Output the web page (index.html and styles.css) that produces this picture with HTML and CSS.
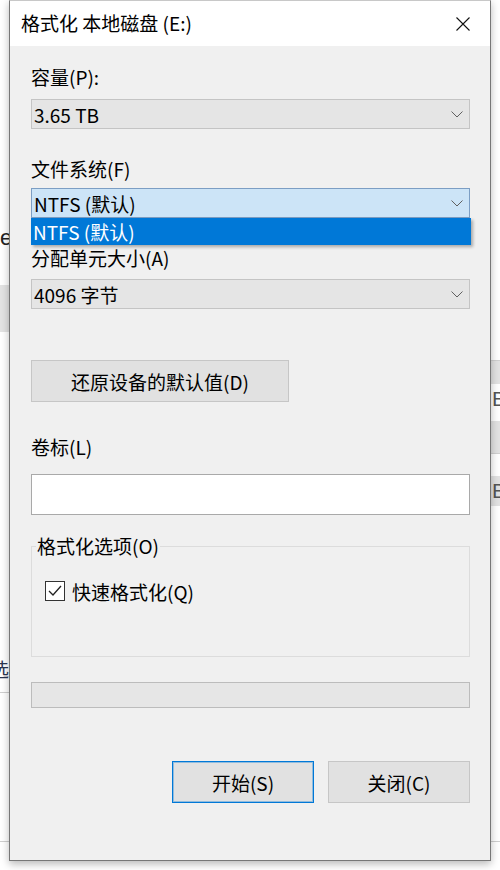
FILE: index.html
```html
<!DOCTYPE html>
<html lang="zh-CN">
<head>
  <meta charset="UTF-8" />
  <meta name="viewport" content="width=device-width, initial-scale=1.0" />
  <title>格式化 本地磁盘 (E:)</title>
  <link rel="stylesheet" href="styles.css">
</head>
<body>
  <div class="desk">
    <!-- bits of the window behind, left side -->
    <div class="side side-left">
      <div class="frag-e">e</div>
      <div class="frag-gray"></div>
      <div class="frag-link"><span>选</span></div>
      <div class="frag-line line-a"></div>
      <div class="frag-line line-b"></div>
    </div>

    <div class="dialog">
      <div class="titlebar">
        <span class="title">格式化 本地磁盘 (E:)</span>
        <svg class="close" width="14" height="14" viewBox="0 0 14 14">
          <path d="M0.5 0.5 L13.5 13.5 M13.5 0.5 L0.5 13.5" stroke="#111" stroke-width="1.1" fill="none" />
        </svg>
      </div>

      <div class="dlg-body">
        <div class="lbl lbl-cap">容量(P):</div>
        <div class="combo combo-cap">
          <span>3.65 TB</span>
          <svg class="chev" width="12" height="7" viewBox="0 0 12 7"><polyline points="0.5,0.5 6,6 11.5,0.5" fill="none" stroke="#606060" stroke-width="1" /></svg>
        </div>

        <div class="lbl lbl-fs">文件系统(F)</div>
        <div class="combo combo-fs focus">
          <span>NTFS (默认)</span>
          <svg class="chev" width="12" height="7" viewBox="0 0 12 7"><polyline points="0.5,0.5 6,6 11.5,0.5" fill="none" stroke="#606060" stroke-width="1" /></svg>
          <div class="dropdown">NTFS (默认)</div>
        </div>

        <div class="lbl lbl-unit">分配单元大小(A)</div>
        <div class="combo combo-unit">
          <span>4096 字节</span>
          <svg class="chev" width="12" height="7" viewBox="0 0 12 7"><polyline points="0.5,0.5 6,6 11.5,0.5" fill="none" stroke="#606060" stroke-width="1" /></svg>
        </div>

        <button class="btn btn-restore">还原设备的默认值(D)</button>

        <div class="lbl lbl-vol">卷标(L)</div>
        <input class="textbox" type="text" value="" />

        <fieldset class="group">
          <legend>格式化选项(O)</legend>
          <label class="check-row">
            <span class="checkbox">
              <svg width="14" height="12" viewBox="0 0 14 12"><polyline points="1,6 5,10 13,1" fill="none" stroke="#222" stroke-width="1.3" /></svg>
            </span>
            <span>快速格式化(Q)</span>
          </label>
        </fieldset>

        <div class="progress"></div>

        <div class="actions">
          <button class="btn btn-default">开始(S)</button>
          <button class="btn">关闭(C)</button>
        </div>
      </div>
    </div>

    <!-- bits of the window behind, right side -->
    <div class="side side-right">
      <div class="band band-a"></div>
      <div class="frag-b">B</div>
      <div class="band band-b"></div>
      <div class="band band-c"><span class="frag-b">B</span></div>
      <div class="frag-line line-r"></div>
    </div>
  </div>
</body>
</html>
```

FILE: styles.css
```css
body {
  margin: 0;
  background: #ffffff;
  font-family: "Noto Sans CJK SC", "Noto Sans", sans-serif;
  color: #000;
  overflow: hidden;
}
.desk {
  display: grid;
  grid-template-columns: 9px 482px 9px;
  width: 500px;
  height: 870px;
}

/* background window pieces */
.side {
  display: flex;
  flex-direction: column;
  overflow: hidden;
}
.frag-e {
  margin-top: 227px;
  height: 22px;
  font-family: "Liberation Sans", sans-serif;
  font-size: 22px;
  line-height: 22px;
  color: #222;
}
.frag-gray {
  margin-top: 36px;
  height: 47px;
  background: #e3e3e3;
}
.frag-link {
  margin-top: 325px;
  height: 24px;
  font-size: 19px;
  line-height: 24px;
  color: #2a3550;
  white-space: nowrap;
}
.frag-link span {
  margin-left: -10px;
}
.frag-line {
  height: 1px;
  background: #cfcfcf;
}
.line-a { margin-top: 11px; }
.line-b { margin-top: 148px; }
.band {
  background: #e2e2e2;
}
.band-a { margin-top: 360px; height: 23px; border-top: 1px solid #d0d0d0; }
.band-b { margin-top: 12px; height: 32px; border-bottom: 1px solid #d0d0d0; }
.band-c { margin-top: 22px; height: 30px; }
.frag-b {
  display: block;
  margin-top: 4px;
  height: 21px;
  padding-left: 1px;
  font-family: "Liberation Sans", sans-serif;
  font-size: 21px;
  line-height: 21px;
  color: #555;
}
.line-r { margin-top: 335px; }

/* dialog */
.dialog {
  height: 859px;
  background: #f0f0f0;
  border: 1px solid #777;
  border-top-color: #c8c8c8;
  box-shadow: 0 3px 8px rgba(0, 0, 0, 0.28);
  position: relative;
  z-index: 1;
}
.titlebar {
  height: 45px;
  background: #fff;
  display: flex;
  align-items: center;
  justify-content: space-between;
  padding: 0 20px 0 11px;
}
.title {
  font-size: 19px;
  line-height: 24px;
  margin-top: -1px;
}
.close {
  display: block;
  margin-top: 1px;
}
.dlg-body {
  display: flex;
  flex-direction: column;
  padding: 0 20px 0 21px;
}
.lbl {
  height: 24px;
  font-size: 19px;
  line-height: 24px;
}
.lbl-cap { margin-top: 19px; }
.lbl-fs { margin-top: 28px; }
.lbl-unit { margin-top: 28px; }
.lbl-vol { margin-top: 33px; }

.combo {
  position: relative;
  height: 30px;
  box-sizing: border-box;
  background: #e5e5e5;
  border: 1px solid #c4c4c4;
  display: flex;
  align-items: center;
  justify-content: space-between;
  padding: 0 6px 0 2px;
  font-size: 19px;
}
.combo-cap { margin-top: 10px; }
.combo-fs { margin-top: 7px; }
.combo-unit { margin-top: 9px; }
.combo.focus {
  background: #cce4f7;
  border-color: #7c9ec4;
}
.chev {
  display: block;
}
.dropdown {
  position: absolute;
  top: 29px;
  left: -1px;
  width: 438px;
  height: 27px;
  padding-left: 2px;
  background: #0078d7;
  color: #fff;
  font-size: 19px;
  line-height: 27px;
  box-shadow: 2px 2px 3px rgba(0, 0, 0, 0.3);
  z-index: 2;
}

.btn {
  height: 42px;
  box-sizing: border-box;
  background: #e1e1e1;
  border: 1px solid #c6c6c6;
  font-family: inherit;
  font-size: 19px;
  color: #000;
  padding: 0;
}
.btn-restore {
  margin-top: 51px;
  width: 258px;
}
.textbox {
  margin-top: 15px;
  height: 41px;
  box-sizing: border-box;
  border: 1px solid #a9a9a9;
  background: #fff;
}

.group {
  margin: 19px 0 0 0;
  padding: 23px 0 55px 13px;
  border: 1px solid #dcdcdc;
  min-width: 0;
}
.group legend {
  margin-left: -9px;
  padding: 0 1px;
  font-size: 19px;
  line-height: 24px;
}
.check-row {
  display: flex;
  align-items: center;
  gap: 7px;
  height: 20px;
  font-size: 19px;
}
.checkbox {
  width: 20px;
  height: 20px;
  box-sizing: border-box;
  border: 1px solid #333;
  background: #fff;
  display: flex;
  align-items: center;
  justify-content: center;
}
.checkbox svg {
  display: block;
}

.progress {
  margin-top: 25px;
  height: 26px;
  box-sizing: border-box;
  background: #e6e6e6;
  border: 1px solid #bcbcbc;
}
.actions {
  margin-top: 53px;
  display: flex;
  justify-content: flex-end;
  gap: 14px;
}
.actions .btn {
  width: 142px;
}
.btn-default {
  border-color: #0078d7;
  box-shadow: inset 0 0 0 1px rgba(0, 120, 215, 0.35);
}
```
